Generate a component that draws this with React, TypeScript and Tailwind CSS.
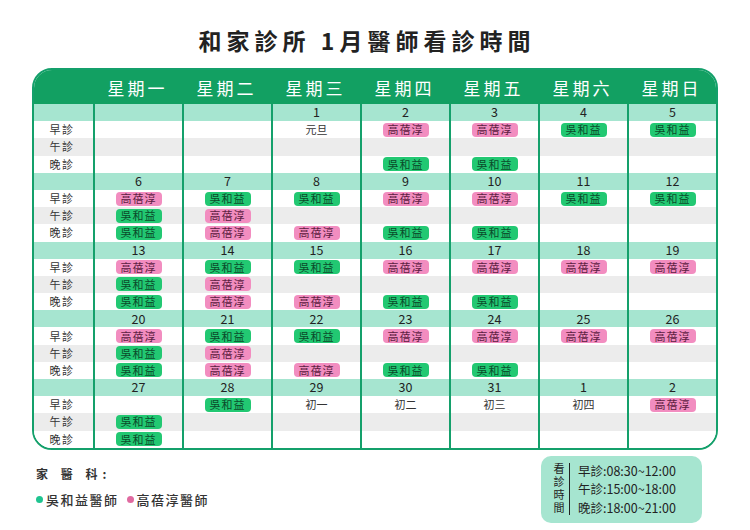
type Doc = "w" | "k" | null;
type Day = { date?: string; note?: string; slots: [Doc, Doc, Doc] };

const W = "w";
const K = "k";

const weeks: Day[][] = [
  [
    { slots: [null, null, null] },
    { slots: [null, null, null] },
    { date: "1", note: "元旦", slots: [null, null, null] },
    { date: "2", slots: [K, null, W] },
    { date: "3", slots: [K, null, W] },
    { date: "4", slots: [W, null, null] },
    { date: "5", slots: [W, null, null] },
  ],
  [
    { date: "6", slots: [K, W, W] },
    { date: "7", slots: [W, K, K] },
    { date: "8", slots: [W, null, K] },
    { date: "9", slots: [K, null, W] },
    { date: "10", slots: [K, null, W] },
    { date: "11", slots: [W, null, null] },
    { date: "12", slots: [W, null, null] },
  ],
  [
    { date: "13", slots: [K, W, W] },
    { date: "14", slots: [W, K, K] },
    { date: "15", slots: [W, null, K] },
    { date: "16", slots: [K, null, W] },
    { date: "17", slots: [K, null, W] },
    { date: "18", slots: [K, null, null] },
    { date: "19", slots: [K, null, null] },
  ],
  [
    { date: "20", slots: [K, W, W] },
    { date: "21", slots: [W, K, K] },
    { date: "22", slots: [W, null, K] },
    { date: "23", slots: [K, null, W] },
    { date: "24", slots: [K, null, W] },
    { date: "25", slots: [K, null, null] },
    { date: "26", slots: [K, null, null] },
  ],
  [
    { date: "27", slots: [null, W, W] },
    { date: "28", slots: [W, null, null] },
    { date: "29", note: "初一", slots: [null, null, null] },
    { date: "30", note: "初二", slots: [null, null, null] },
    { date: "31", note: "初三", slots: [null, null, null] },
    { date: "1", note: "初四", slots: [null, null, null] },
    { date: "2", slots: [K, null, null] },
  ],
];

const days = ["星期一", "星期二", "星期三", "星期四", "星期五", "星期六", "星期日"];
const sessions = ["早診", "午診", "晚診"];
const rowBg = ["bg-white", "bg-[#ececec]", "bg-white"];

function Badge({ doc }: { doc: Doc }) {
  if (doc === "w") {
    return (
      <span className="flex h-[14px] w-[46px] items-center justify-center rounded-[4px] bg-[#22c872] text-[11px] leading-none tracking-[1px] text-[#0b4a2a]">
        吳和益
      </span>
    );
  }
  if (doc === "k") {
    return (
      <span className="flex h-[14px] w-[46px] items-center justify-center rounded-[4px] bg-[#f28dc0] text-[11px] leading-none tracking-[1px] text-[#5c2040]">
        高蓓淳
      </span>
    );
  }
  return null;
}

function Week({ week }: { week: Day[] }) {
  return (
    <div>
      <div className="grid h-[17.2px] grid-cols-[59px_repeat(7,1fr)] bg-[#a6e5d0]">
        <div />
        {week.map((d, i) => (
          <div key={i} className="flex items-center justify-center border-l-2 border-[#14a06b] text-[12.5px] leading-none text-[#222]">
            {d.date}
          </div>
        ))}
      </div>
      {sessions.map((s, r) => (
        <div key={s} className={`grid h-[17.2px] grid-cols-[59px_repeat(7,1fr)] ${rowBg[r]}`}>
          <div className="flex items-center justify-center pr-[3px] text-[11px] leading-none tracking-[1.5px] text-[#333]">
            {s}
          </div>
          {week.map((d, i) => (
            <div key={i} className="flex items-center justify-center border-l-2 border-[#14a06b] text-[11px] leading-none text-[#333]">
              {r === 0 && d.note ? d.note : <Badge doc={d.slots[r]} />}
            </div>
          ))}
        </div>
      ))}
    </div>
  );
}

export default function App() {
  return (
    <div
      className="h-[530px] w-[750px] overflow-hidden bg-white"
      style={{ fontFamily: '"Noto Sans CJK TC", "Noto Sans", sans-serif' }}
    >
      {/* Title */}
      <h1 className="pt-[25px] pr-[16px] text-center text-[23px] leading-[30px] font-semibold tracking-[5px] text-[#222]">
        和家診所 1月醫師看診時間
      </h1>

      {/* Calendar */}
      <div className="mt-[13px] ml-[32px] w-[686px] overflow-hidden rounded-[20px] border-2 border-[#14a06b]">
        <div className="grid h-[34px] grid-cols-[59px_repeat(7,1fr)] bg-[#12a062]">
          <div />
          {days.map((d) => (
            <div key={d} className="flex items-center justify-center text-[17px] leading-none tracking-[3px] text-white">
              {d}
            </div>
          ))}
        </div>
        {weeks.map((w, i) => (
          <Week key={i} week={w} />
        ))}
      </div>

      {/* Footer */}
      <div className="ml-[36px] mr-[48px] flex items-start justify-between pt-[6px]">
        <div className="pt-[8px] text-[#333]">
          <div className="text-[12px] leading-[20px] font-semibold tracking-[5px]">家 醫 科:</div>
          <div className="mt-[6px] flex items-center text-[13px] leading-[20px] font-medium tracking-[1.5px]">
            <span className="mr-[3px] h-[7px] w-[7px] rounded-full bg-[#1fc490]" />
            <span>吳和益醫師</span>
            <span className="mr-[3px] ml-[8px] h-[7px] w-[7px] rounded-full bg-[#e06aa0]" />
            <span>高蓓淳醫師</span>
          </div>
        </div>
        <div className="flex h-[67px] w-[161px] items-center rounded-[10px] bg-[#a6e5d0] pl-[11px] text-[#222]">
          <div className="flex w-[14px] justify-center">
            <span className="text-[11px] leading-[14px] tracking-[2px] [writing-mode:vertical-rl]">看診時間</span>
          </div>
          <div className="ml-[3px] h-[52px] w-px bg-[#222]" />
          <div className="ml-[8px] flex flex-col text-[12.5px] leading-[18.5px]">
            <span>早診:08:30~12:00</span>
            <span>午診:15:00~18:00</span>
            <span>晚診:18:00~21:00</span>
          </div>
        </div>
      </div>
    </div>
  );
}
